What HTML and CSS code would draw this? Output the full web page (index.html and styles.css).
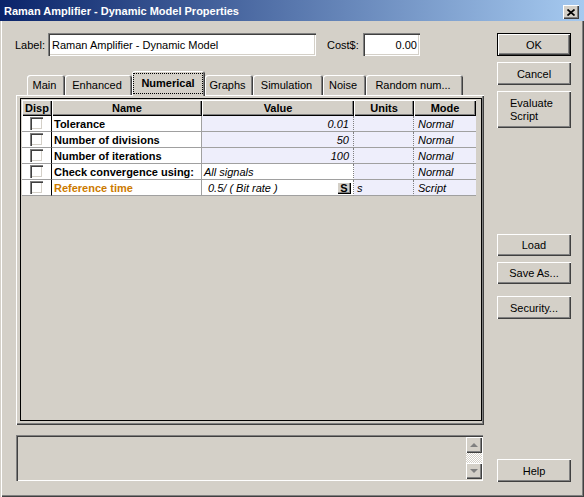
FILE: index.html
```html
<!DOCTYPE html>
<html lang="en">
  <head>
    <title>Raman Amplifier - Dynamic Model Properties</title>
    <meta name="viewport" content="width=device-width, initial-scale=1">
    <link rel="stylesheet" href="styles.css">
  </head>
  <body>
    <div class="window">
      <div class="titlebar">
        <span class="title">Raman Amplifier - Dynamic Model Properties</span>
        <span class="close-btn">
          <svg width="8" height="7" viewBox="0 0 8 7">
            <path d="M0.5 0.5 L7.5 6.5 M7.5 0.5 L0.5 6.5" stroke="#000" stroke-width="1.7" fill="none"/>
          </svg>
        </span>
      </div>
      <div class="client">
        <div class="left">
          <div class="label-row">
            <span class="lbl">Label:</span>
            <input class="field name-field" type="text" value="Raman Amplifier - Dynamic Model">
            <span class="lbl cost-lbl">Cost$:</span>
            <input class="field cost-field" type="text" value="0.00">
          </div>

          <div class="tabs">
            <div class="tab" style="width: 38px">Main</div>
            <div class="tab" style="width: 67px">Enhanced</div>
            <div class="tab active" style="width: 73px"><span class="focus">Numerical</span></div>
            <div class="tab" style="width: 48px">Graphs</div>
            <div class="tab" style="width: 70px">Simulation</div>
            <div class="tab" style="width: 43px">Noise</div>
            <div class="tab" style="width: 97px">Random num...</div>
          </div>

          <div class="panel">
            <div class="grid">
              <div class="row head">
                <div class="hcell">Disp</div>
                <div class="hcell">Name</div>
                <div class="hcell">Value</div>
                <div class="hcell">Units</div>
                <div class="hcell">Mode</div>
              </div>
              <div class="row">
                <div class="cell disp"><span class="check"></span></div>
                <div class="cell name">Tolerance</div>
                <div class="cell value num">0.01</div>
                <div class="cell units"></div>
                <div class="cell mode">Normal</div>
              </div>
              <div class="row">
                <div class="cell disp"><span class="check"></span></div>
                <div class="cell name">Number of divisions</div>
                <div class="cell value num">50</div>
                <div class="cell units"></div>
                <div class="cell mode">Normal</div>
              </div>
              <div class="row">
                <div class="cell disp"><span class="check"></span></div>
                <div class="cell name">Number of iterations</div>
                <div class="cell value num">100</div>
                <div class="cell units"></div>
                <div class="cell mode">Normal</div>
              </div>
              <div class="row">
                <div class="cell disp"><span class="check"></span></div>
                <div class="cell name">Check convergence using:</div>
                <div class="cell value plain">All signals</div>
                <div class="cell units"></div>
                <div class="cell mode">Normal</div>
              </div>
              <div class="row">
                <div class="cell disp"><span class="check"></span></div>
                <div class="cell name ref">Reference time</div>
                <div class="cell value script"><span class="expr">0.5/ ( Bit rate )</span><span class="sbtn">S</span></div>
                <div class="cell units">s</div>
                <div class="cell mode">Script</div>
              </div>
            </div>
          </div>

          <div class="msgbox">
            <div class="scroll">
              <span class="arrow up"></span>
              <span class="track"></span>
              <span class="arrow down"></span>
            </div>
          </div>
        </div>

        <div class="side">
          <button class="btn default ok">OK</button>
          <button class="btn cancel">Cancel</button>
          <button class="btn evaluate">Evaluate<br>Script</button>
          <button class="btn load">Load</button>
          <button class="btn save">Save As...</button>
          <button class="btn security">Security...</button>
          <button class="btn help">Help</button>
        </div>
      </div>
    </div>
  </body>
</html>
```

FILE: styles.css
```css
body {
  margin: 0;
  background-color: #d4d0c8;
  font-family: "Liberation Sans", Arial, sans-serif;
  font-size: 11px;
  color: #000;
}
.window {
  width: 584px;
  height: 497px;
  box-sizing: border-box;
  box-shadow: inset 1px 1px #d4d0c8, inset 2px 2px #fff, inset -1px -1px #404040, inset -2px -2px #808080;
}
.titlebar {
  height: 21px;
  display: flex;
  align-items: center;
  justify-content: space-between;
  padding: 0 5px 0 4px;
  background: linear-gradient(to right, #0a246a, #a6caf0);
  color: #fff;
  font-weight: bold;
}
.close-btn {
  width: 16px;
  height: 14px;
  margin-top: 3px;
  box-sizing: border-box;
  display: flex;
  align-items: center;
  justify-content: center;
  background-color: #d4d0c8;
  box-shadow: inset 1px 1px #fff, inset -1px -1px #404040, inset -2px -2px #808080;
}
.client {
  display: flex;
}
.left {
  padding-left: 15px;
}

/* label / cost row */
.label-row {
  display: flex;
  align-items: center;
  height: 23px;
  margin-top: 12px;
}
.lbl {
  width: 33px;
}
.cost-lbl {
  width: 36px;
  margin-left: 11px;
}
.field {
  height: 23px;
  box-sizing: border-box;
  border: none;
  margin: 0;
  background-color: #fff;
  font-family: inherit;
  font-size: 11px;
  color: #000;
  box-shadow: inset 1px 1px #808080, inset 2px 2px #404040, inset -1px -1px #fff, inset -2px -2px #d4d0c8;
}
.name-field {
  width: 268px;
  padding: 0 0 0 4px;
}
.cost-field {
  width: 57px;
  padding: 0 3px 0 0;
  text-align: right;
}

/* tabs */
.tabs {
  display: flex;
  align-items: flex-end;
  height: 24px;
  margin: 15px 0 0 1px;
  padding-left: 11px;
}
.tab {
  height: 20px;
  box-sizing: border-box;
  line-height: 21px;
  text-align: center;
  padding-right: 3px;
  border-radius: 3px 3px 0 0;
  box-shadow: inset 1px 1px #fff, inset -1px 0 #404040, inset -2px 0 #808080;
}
.tab.active {
  position: relative;
  z-index: 1;
  height: 25px;
  margin-bottom: -1px;
  padding: 2px 2px 2px 1px;
  background-color: #d4d0c8;
  font-weight: bold;
}
.tab .focus {
  display: block;
  height: 21px;
  box-sizing: border-box;
  border: 1px dotted #000;
  line-height: 18px;
}

/* tab page */
.panel {
  width: 468px;
  height: 330px;
  margin-left: 1px;
  box-sizing: border-box;
  padding: 3px 0 0 4px;
  box-shadow: inset 1px 1px #fff, inset -1px -1px #404040, inset -2px -2px #808080;
}
.grid {
  width: 462px;
  height: 323px;
  box-sizing: border-box;
  border: 1px solid #000;
  padding: 1px 0 0 1px;
}
.row {
  display: grid;
  grid-template-columns: 30px 150px 152px 60px 62px;
}
.hcell {
  height: 16px;
  line-height: 16px;
  text-align: center;
  font-weight: bold;
  box-shadow: inset 1px 1px #fff, inset -1px -1px #000, inset -2px -2px #808080;
}
.cell {
  height: 16px;
  box-sizing: border-box;
  line-height: 16px;
  border-bottom: 1px solid #a0a0a0;
  white-space: nowrap;
  overflow: hidden;
}
.disp {
  background-color: #fff;
  border-right: 1px solid #000;
  padding: 1px 0 0 8px;
}
.check {
  display: block;
  width: 13px;
  height: 13px;
  background-color: #fff;
  box-shadow: inset 1px 1px #808080, inset 2px 2px #404040, inset -1px -1px #fff, inset -2px -2px #d4d0c8;
}
.name {
  background-color: #fff;
  border-right: 1px solid #a0a0a0;
  padding-left: 2px;
  font-weight: bold;
}
.name.ref {
  color: #cc7a00;
}
.value, .units, .mode {
  background-color: #eeeefb;
  font-style: italic;
}
.value, .units {
  border-right: 1px dotted #808080;
}
.value.num {
  text-align: right;
  padding-right: 4px;
}
.value.plain {
  padding-left: 2px;
  background-color: #fff;
}
.value.script {
  display: flex;
  align-items: center;
  justify-content: space-between;
  padding: 0 2px 0 6px;
  background-color: #fff;
}
.sbtn {
  width: 14px;
  height: 12px;
  box-sizing: border-box;
  line-height: 12px;
  text-align: center;
  font-style: normal;
  font-weight: bold;
  font-size: 11px;
  background-color: #d4d0c8;
  box-shadow: inset 1px 1px #fff, inset -1px -1px #000, inset -2px -2px #808080;
}
.units {
  padding-left: 3px;
}
.mode {
  padding-left: 4px;
}

/* message box */
.msgbox {
  width: 467px;
  height: 46px;
  margin: 10px 0 0 1px;
  box-sizing: border-box;
  padding: 2px 1px 2px 0;
  display: flex;
  justify-content: flex-end;
  box-shadow: inset 1px 1px #808080, inset 2px 2px #404040, inset -1px -1px #fff, inset -2px -2px #d4d0c8;
}
.scroll {
  width: 16px;
  display: flex;
  flex-direction: column;
}
.arrow {
  position: relative;
  height: 16px;
  box-sizing: border-box;
  background-color: #d4d0c8;
  box-shadow: inset 1px 1px #fff, inset -1px -1px #404040, inset -2px -2px #808080;
}
.arrow::after {
  content: "";
  position: absolute;
  left: 4px;
  width: 0;
  height: 0;
  border-left: 4px solid transparent;
  border-right: 4px solid transparent;
}
.arrow.up::after {
  top: 6px;
  border-bottom: 4px solid #808080;
}
.arrow.down::after {
  top: 6px;
  border-top: 4px solid #808080;
}
.track {
  flex: 1;
  background: repeating-conic-gradient(#fff 0 25%, #d4d0c8 0 50%) 0 0 / 2px 2px;
}

/* right buttons */
.side {
  display: flex;
  flex-direction: column;
  width: 74px;
  margin-left: 13px;
}
.btn {
  height: 23px;
  box-sizing: border-box;
  padding: 0;
  border: none;
  background-color: #d4d0c8;
  font-family: inherit;
  font-size: 11px;
  color: #000;
  box-shadow: inset 1px 1px #fff, inset -1px -1px #404040, inset -2px -2px #808080;
}
.btn.default {
  border: 1px solid #000;
}
.ok { margin-top: 12px; }
.cancel { margin-top: 6px; }
.evaluate {
  height: 37px;
  margin-top: 6px;
  text-align: left;
  padding-left: 13px;
  line-height: 13px;
}
.load { margin-top: 106px; height: 22px; }
.save { margin-top: 6px; height: 22px; }
.security { margin-top: 12px; }
.help { margin-top: 140px; }
```
